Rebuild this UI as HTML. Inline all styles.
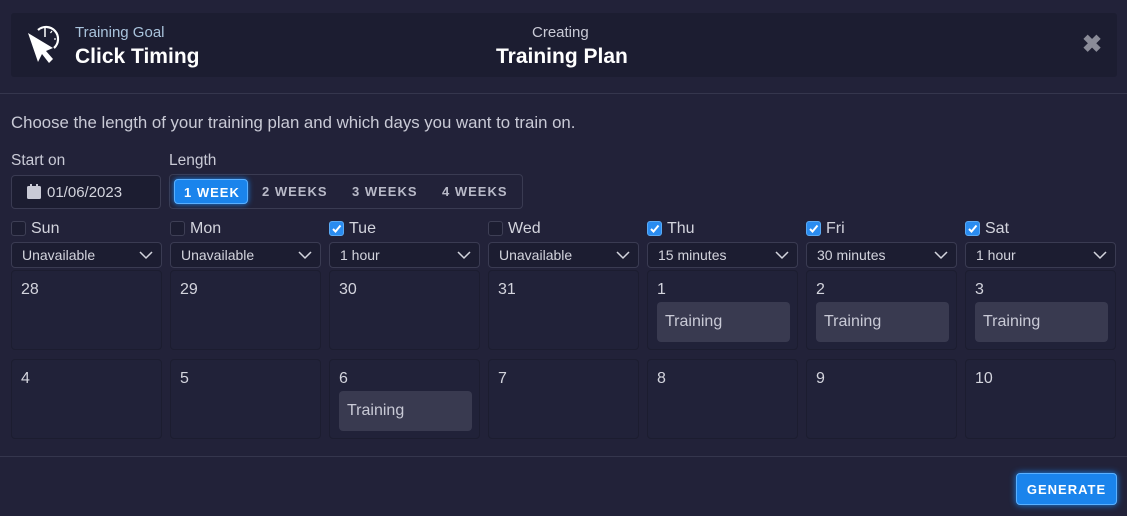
<!DOCTYPE html>
<html><head><meta charset="utf-8"><style>
*{box-sizing:border-box;margin:0;padding:0}
body{width:1127px;height:516px;background:#222239;font-family:"Liberation Sans",sans-serif;color:#c9cad6;position:relative;overflow:hidden}
.abs{position:absolute}
.hdr{left:11px;top:13px;width:1106px;height:64px;background:#1c1d31;border-radius:3px}
.div{left:0;width:1127px;height:1px;background:#35364d}
.sel{height:26px;border:1px solid #3a3b52;border-radius:4px;background:#1c1d31;font-size:14px;color:#d3d4dd;padding:4px 0 0 10px}
.sel svg{position:absolute;right:8px;top:8px}
.cb{width:15px;height:15px;border-radius:3px;border:1px solid #3e3f55;background:#1c1d31}
.cb.on{background:#2a8cf0;border-color:#5aaaf5}
.day{font-size:16px;color:#d3d4dd}
.cell{width:151px;height:80px;background:#212239;border:1px solid #1c1d30;border-radius:4px}
.cell span{position:absolute;left:9px;top:10px;font-size:16px;color:#d3d4dd}
.tr{position:absolute;left:9px;top:31px;width:133px;height:40px;background:#393a50;border-radius:4px;font-size:16px;color:#c9cad6;padding:11px 0 0 8px}
.wk{font-size:13px;font-weight:bold;letter-spacing:1px;color:#b9bac8}
</style></head><body>
<div class="abs hdr"></div>
<svg class="abs" style="left:15px;top:20px" width="50" height="50" viewBox="15 20 50 50">
<path d="M38 30 A12 12 0 1 1 54 48" fill="none" stroke="#fff" stroke-width="2.2"/>
<line x1="45" y1="28" x2="45" y2="37" stroke="#fff" stroke-width="1.5"/>
<line x1="52" y1="31" x2="50.5" y2="33" stroke="#fff" stroke-width="1.2"/>
<line x1="56" y1="39" x2="54" y2="39" stroke="#fff" stroke-width="1.2"/>
<polygon points="28,33 38,62 42,54 49,63 53,59 46,51 53,48" fill="#fff"/>
</svg>
<div class="abs" style="left:75px;top:24px;font-size:15px;color:#a9c3dc">Training Goal</div>
<div class="abs" style="left:75px;top:45px;font-size:21px;font-weight:bold;color:#fff">Click Timing</div>
<div class="abs" style="left:532px;top:24px;font-size:15px;color:#c9cad6">Creating</div>
<div class="abs" style="left:496px;top:45px;font-size:21px;font-weight:bold;color:#fff">Training Plan</div>
<div class="abs" style="left:1082px;top:30px;font-size:24px;font-weight:bold;color:#8a8b98">✖</div>
<div class="abs div" style="top:93px"></div>
<div class="abs" style="left:11px;top:113px;font-size:16.8px;color:#c9cad6">Choose the length of your training plan and which days you want to train on.</div>
<div class="abs" style="left:11px;top:152px;font-size:15.5px">Start on</div>
<div class="abs" style="left:169px;top:152px;font-size:15.5px">Length</div>
<div class="abs" style="left:11px;top:175px;width:150px;height:34px;border:1px solid #3a3b52;border-radius:4px;background:#1c1d31"></div>
<svg class="abs" style="left:27px;top:184px" width="14" height="15"><rect x="0" y="2" width="14" height="13" rx="1.5" fill="#c9cad6"/><rect x="3" y="0" width="2" height="4" fill="#c9cad6"/><rect x="9" y="0" width="2" height="4" fill="#c9cad6"/></svg>
<div class="abs" style="left:47px;top:184px;font-size:15px;color:#d3d4dd">01/06/2023</div>
<div class="abs" style="left:169px;top:174px;width:354px;height:35px;border:1px solid #3a3b52;border-radius:4px"></div>
<div class="abs wk" style="left:174px;top:179px;width:74px;height:25px;background:#1a84ec;border:1px solid #5ab0ff;border-radius:4px;color:#fff;padding:5px 0 0 9px;box-shadow:0 0 6px #1a84ec">1 WEEK</div>
<div class="abs wk" style="left:262px;top:184px">2 WEEKS</div>
<div class="abs wk" style="left:352px;top:184px">3 WEEKS</div>
<div class="abs wk" style="left:442px;top:184px">4 WEEKS</div>

<div class="abs cb" style="left:11px;top:221px"></div><div class="abs day" style="left:31px;top:220px">Sun</div>
<div class="abs cb" style="left:170px;top:221px"></div><div class="abs day" style="left:190px;top:220px">Mon</div>
<div class="abs cb on" style="left:329px;top:221px"><svg width="13" height="13" style="display:block"><path d="M3 7 L5.5 9.5 L10.5 3.5" stroke="#fff" stroke-width="2" fill="none"/></svg></div><div class="abs day" style="left:349px;top:220px">Tue</div>
<div class="abs cb" style="left:488px;top:221px"></div><div class="abs day" style="left:508px;top:220px">Wed</div>
<div class="abs cb on" style="left:647px;top:221px"><svg width="13" height="13" style="display:block"><path d="M3 7 L5.5 9.5 L10.5 3.5" stroke="#fff" stroke-width="2" fill="none"/></svg></div><div class="abs day" style="left:667px;top:220px">Thu</div>
<div class="abs cb on" style="left:806px;top:221px"><svg width="13" height="13" style="display:block"><path d="M3 7 L5.5 9.5 L10.5 3.5" stroke="#fff" stroke-width="2" fill="none"/></svg></div><div class="abs day" style="left:826px;top:220px">Fri</div>
<div class="abs cb on" style="left:965px;top:221px"><svg width="13" height="13" style="display:block"><path d="M3 7 L5.5 9.5 L10.5 3.5" stroke="#fff" stroke-width="2" fill="none"/></svg></div><div class="abs day" style="left:985px;top:220px">Sat</div>

<div class="abs sel" style="left:11px;top:242px;width:151px">Unavailable<svg width="14" height="9"><path d="M1 1 L7 7 L13 1" stroke="#d3d4dd" stroke-width="1.5" fill="none"/></svg></div>
<div class="abs sel" style="left:170px;top:242px;width:151px">Unavailable<svg width="14" height="9"><path d="M1 1 L7 7 L13 1" stroke="#d3d4dd" stroke-width="1.5" fill="none"/></svg></div>
<div class="abs sel" style="left:329px;top:242px;width:151px">1 hour<svg width="14" height="9"><path d="M1 1 L7 7 L13 1" stroke="#d3d4dd" stroke-width="1.5" fill="none"/></svg></div>
<div class="abs sel" style="left:488px;top:242px;width:151px">Unavailable<svg width="14" height="9"><path d="M1 1 L7 7 L13 1" stroke="#d3d4dd" stroke-width="1.5" fill="none"/></svg></div>
<div class="abs sel" style="left:647px;top:242px;width:151px">15 minutes<svg width="14" height="9"><path d="M1 1 L7 7 L13 1" stroke="#d3d4dd" stroke-width="1.5" fill="none"/></svg></div>
<div class="abs sel" style="left:806px;top:242px;width:151px">30 minutes<svg width="14" height="9"><path d="M1 1 L7 7 L13 1" stroke="#d3d4dd" stroke-width="1.5" fill="none"/></svg></div>
<div class="abs sel" style="left:965px;top:242px;width:151px">1 hour<svg width="14" height="9"><path d="M1 1 L7 7 L13 1" stroke="#d3d4dd" stroke-width="1.5" fill="none"/></svg></div>

<div class="abs cell" style="left:11px;top:270px"><span>28</span></div>
<div class="abs cell" style="left:170px;top:270px"><span>29</span></div>
<div class="abs cell" style="left:329px;top:270px"><span>30</span></div>
<div class="abs cell" style="left:488px;top:270px"><span>31</span></div>
<div class="abs cell" style="left:647px;top:270px"><span>1</span><div class="tr">Training</div></div>
<div class="abs cell" style="left:806px;top:270px"><span>2</span><div class="tr">Training</div></div>
<div class="abs cell" style="left:965px;top:270px"><span>3</span><div class="tr">Training</div></div>
<div class="abs cell" style="left:11px;top:359px"><span>4</span></div>
<div class="abs cell" style="left:170px;top:359px"><span>5</span></div>
<div class="abs cell" style="left:329px;top:359px"><span>6</span><div class="tr">Training</div></div>
<div class="abs cell" style="left:488px;top:359px"><span>7</span></div>
<div class="abs cell" style="left:647px;top:359px"><span>8</span></div>
<div class="abs cell" style="left:806px;top:359px"><span>9</span></div>
<div class="abs cell" style="left:965px;top:359px"><span>10</span></div>

<div class="abs div" style="top:456px"></div>
<div class="abs" style="left:1016px;top:473px;width:101px;height:32px;background:#1a84ec;border:1px solid #5ab0ff;border-radius:4px;box-shadow:0 0 7px #1a84ec;color:#fff;font-size:13px;font-weight:bold;letter-spacing:1px;text-align:center;padding-top:8px">GENERATE</div>
</body></html>
